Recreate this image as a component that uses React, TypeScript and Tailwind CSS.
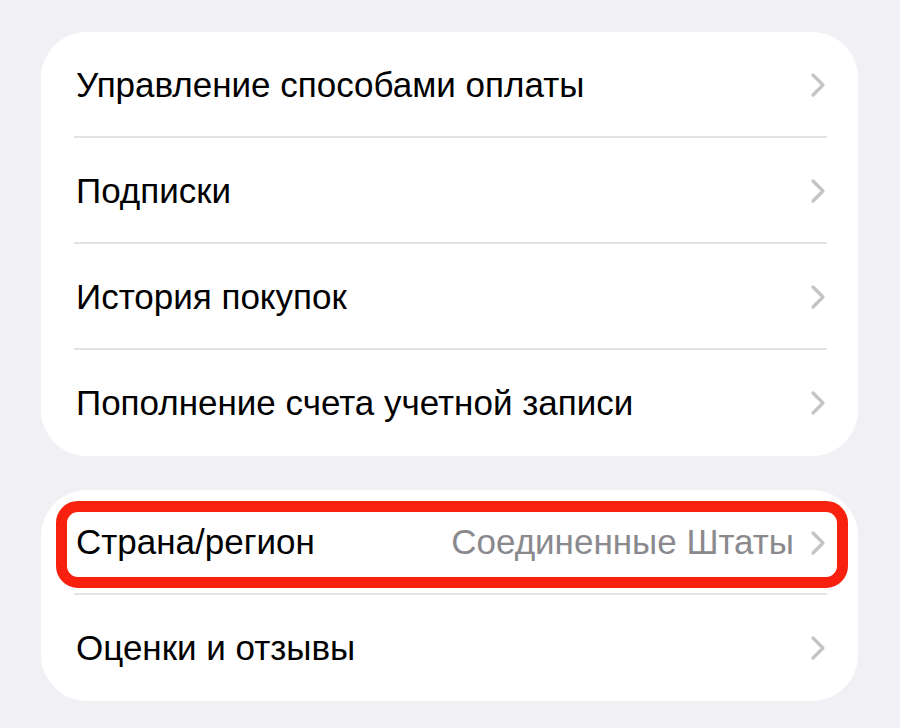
import React from "react";

const Chevron = () => (
  <svg width="16" height="26" viewBox="0 0 16 26" fill="none" className="shrink-0">
    <path d="M3 3 L13 13 L3 23" stroke="#c4c4c7" strokeWidth="3.2" strokeLinecap="round" strokeLinejoin="round" />
  </svg>
);

const Row = ({ label, value, divider }: { label: string; value?: string; divider?: boolean }) => (
  <div className="relative h-[106px] flex items-center pl-[35px] pr-[32px]">
    <span className="flex-1 text-[35px] text-black">{label}</span>
    {value && <span className="text-[35px] text-[#8a8a8e] mr-[16px]">{value}</span>}
    <Chevron />
    {divider && <div className="absolute left-[33px] right-[31px] bottom-0 h-[2px] bg-[#e3e3e6]" />}
  </div>
);

export default function App() {
  return (
    <div className="w-[900px] h-[728px] bg-[#f0f0f5] pt-[32px] pl-[41px] overflow-hidden" style={{ fontFamily: '"Liberation Sans", Arial, sans-serif' }}>
      <div className="w-[817px] bg-white rounded-[46px] overflow-hidden">
        <Row label="Управление способами оплаты" divider />
        <Row label="Подписки" divider />
        <Row label="История покупок" divider />
        <Row label="Пополнение счета учетной записи" />
      </div>
      <div className="relative mt-[34px] w-[817px] bg-white rounded-[46px]">
        <div className="relative h-[105px] flex items-center pl-[35px] pr-[32px]">
          <span className="flex-1 text-[35px] text-black">Страна/регион</span>
          <span className="text-[35px] text-[#8a8a8e] mr-[16px]">Соединенные Штаты</span>
          <Chevron />
          <div className="absolute left-[33px] right-[31px] bottom-0 h-[2px] bg-[#e3e3e6]" />
          <div className="absolute left-[15px] right-[10px] top-[11px] bottom-[7px] border-[11px] border-[#f8200e] rounded-[22px]" />
        </div>
        <Row label="Оценки и отзывы" />
      </div>
    </div>
  );
}
